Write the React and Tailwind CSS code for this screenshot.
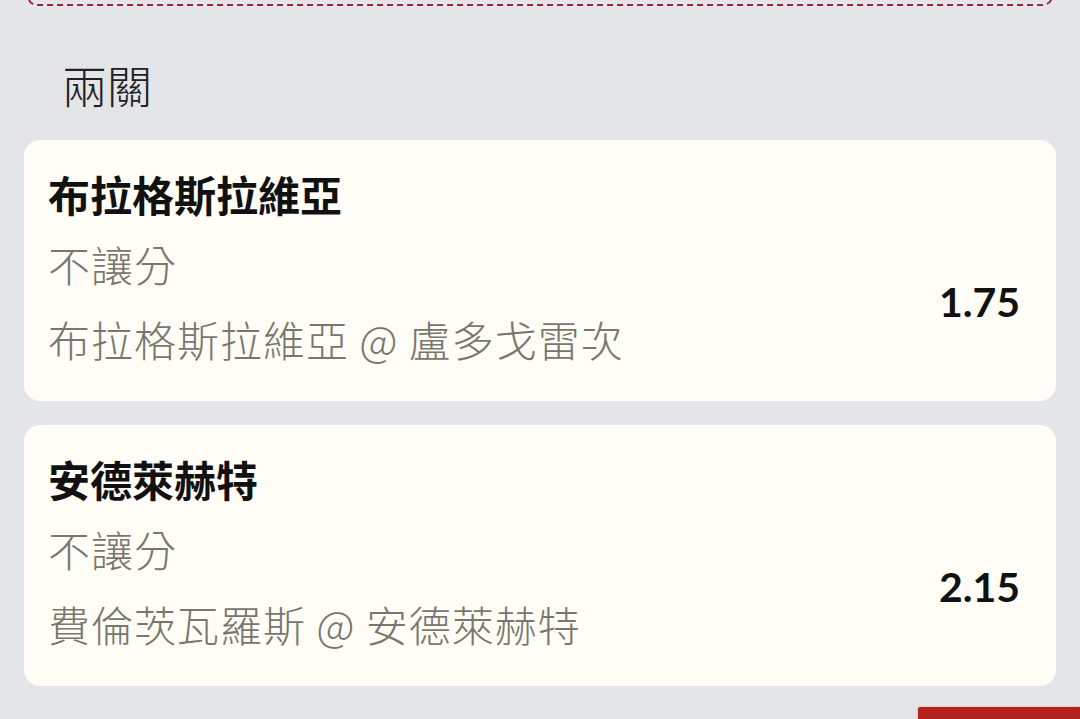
import React from 'react';

const legs = [
    { team: '布拉格斯拉維亞', market: '不讓分', match: '布拉格斯拉維亞 @ 盧多戈雷次', odds: '1.75' },
    { team: '安德萊赫特', market: '不讓分', match: '費倫茨瓦羅斯 @ 安德萊赫特', odds: '2.15' },
];

const cjk = { fontFamily: "'Noto Sans CJK TC', sans-serif" };

const LegCard = ({ leg }) => (
    <div className="rounded-[16px] bg-[#fffdf5] pl-[24px] pr-[36px] pt-[35px] pb-[41px]">
        <div className="text-[42px] font-bold leading-none text-[#111111]">{leg.team}</div>
        <div className="mt-[26px] flex items-center justify-between">
            <div className="text-[42px] font-light leading-none tracking-[1px] text-[#77776f]" style={cjk}>
                <div>{leg.market}</div>
                <div className="mt-[33px]">{leg.match}</div>
            </div>
            <div className="text-[41px] font-bold leading-none text-[#111111]">{leg.odds}</div>
        </div>
    </div>
);

export default function App() {
    return (
        <div
            className="h-[719px] w-[1080px] overflow-hidden bg-[#e4e5e9]"
            style={{ fontFamily: "Lato, 'Noto Sans CJK TC', sans-serif" }}
        >
            {/* previous panel, only its bottom edge shows */}
            <div className="mx-[27px] -mt-[100px] h-[106px] rounded-[10px] border-2 border-dashed border-[#a02236]" />

            <div className="pl-[62px] pt-[59px] text-[45px] font-extralight leading-none text-[#222222]">兩關</div>

            <div className="mx-[24px] mt-[30px] flex flex-col gap-[24px]">
                {legs.map(leg => (
                    <LegCard key={leg.team} leg={leg} />
                ))}
            </div>

            <div className="mt-[21px] flex justify-end">
                <div className="h-[14px] w-[162px] rounded-tl-[2px] bg-[#b5231c] shadow-[0_0_2px_rgba(181,35,28,0.4)]" />
            </div>
        </div>
    );
}
